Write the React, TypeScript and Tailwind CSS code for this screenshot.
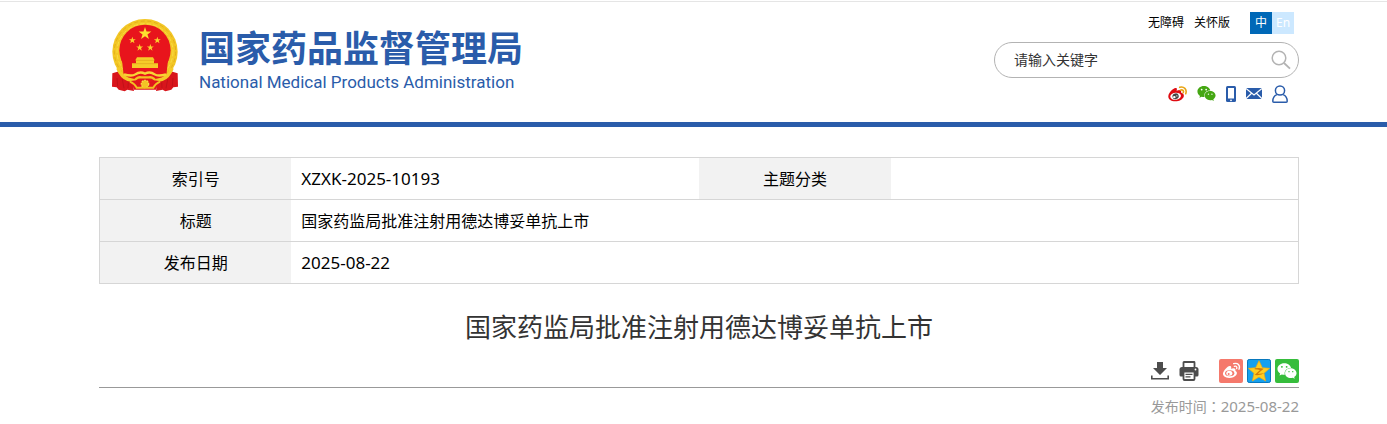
import { useState } from "react";
import { FaWeixin } from "react-icons/fa";

const rows = [
  { label: "标题", value: "国家药监局批准注射用德达博妥单抗上市", size: "text-base" },
  { label: "发布日期", value: "2025-08-22", size: "text-[17px]" },
];

const STAR = "M0 -10 L2.3 -3.1 9.5 -3.1 3.7 1.2 5.9 8.1 0 3.9 -5.9 8.1 -3.7 1.2 -9.5 -3.1 -2.3 -3.1Z";

function Emblem() {
  return (
    <svg viewBox="33 24 204 222" className="h-[74px] w-[68px] shrink-0" aria-hidden="true">
      <circle cx="135" cy="125" r="98" fill="#f3c725" />
      <circle cx="135" cy="125" r="92" fill="none" stroke="#e4b01c" strokeWidth="3" strokeDasharray="12 8" />
      <circle cx="135" cy="125" r="84" fill="none" stroke="#f9dc45" strokeWidth="3" strokeDasharray="14 6" />
      <path d="M66 150H204L196 226H74Z" fill="#e5171c" />
      <circle cx="135" cy="121" r="77" fill="#e8141c" />
      <path d={STAR} fill="#fde02f" transform="translate(135 71) scale(2)" />
      <path d={STAR} fill="#fbd02c" transform="translate(97 91) scale(1.1)" />
      <path d={STAR} fill="#fbd02c" transform="translate(172 91) scale(1.1)" />
      <path d={STAR} fill="#fbd02c" transform="translate(119 113) scale(1.1)" />
      <path d={STAR} fill="#fbd02c" transform="translate(151 113) scale(1.1)" />
      <path d="M111 142h48l5 9h-58zM108 151h54v9h-54zM96 160h78v14H96z" fill="#f6cb28" />
      <path d="M107 151h56M97 161h76" stroke="#e0a11c" strokeWidth="2" />
      <path d="M37 190 L63 182 Q69 206 96 205 L102 243 L82 239 L74 244 L56 239 L50 232 L36 230Z" fill="#d8151c" />
      <path d="M233 190 L207 182 Q201 206 174 205 L168 243 L188 239 L196 244 L214 239 L220 232 L234 230Z" fill="#d8151c" />
      <path d="M54 174 Q64 200 84 208 L106 213" fill="none" stroke="#f5c928" strokeWidth="11" />
      <path d="M216 174 Q206 200 186 208 L164 213" fill="none" stroke="#f5c928" strokeWidth="11" />
      <path d="M72 193 Q96 200 106 193 Q120 183 135 191 Q150 183 164 193 Q174 200 198 193" fill="none" stroke="#f8d435" strokeWidth="7" />
      <path d="M100 219 Q108 199 124 202 H146 Q162 199 170 219" fill="none" stroke="#f2c122" strokeWidth="7" />
      <path d="M92 213 L111 211 Q135 239 159 211 L178 213 L168 239 H102Z" fill="#e0171d" />
      <circle cx="135" cy="222" r="11" fill="#f3c325" stroke="#f9dd4b" strokeWidth="4" strokeDasharray="5 3" />
      <path d="M90 215 Q104 221 110 233 H160 Q166 221 180 215" fill="none" stroke="#f2c122" strokeWidth="6" />
      <path d="M51 204l2 25M67 208l5 27M85 217l-1 17M219 204l-2 25M203 208l-5 27M185 217l1 17" stroke="#b50f16" strokeWidth="2" fill="none" />
    </svg>
  );
}

function WeiboIcon() {
  return (
    <svg viewBox="0 0 60 48" className="h-4 w-[19px]" aria-hidden="true">
      <path d="M24 5C30 4 28 11 27 14C35 10 44 10 41 19C60 25 47 47 24 47C8 47 0 39 1 30C3 19 15 6 24 5Z" fill="#df0b12" />
      <ellipse cx="24" cy="31" rx="17" ry="11" fill="#fff" transform="rotate(-7 24 31)" />
      <ellipse cx="24" cy="31" rx="10" ry="9" fill="#444" transform="rotate(-12 24 31)" />
      <ellipse cx="20" cy="34" rx="4" ry="3.5" fill="#fff" />
      <circle cx="28" cy="30" r="2" fill="#fff" />
      <path d="M37 3C50 -1 61 9 56 23M39 12C46 9 51 14 48 20" fill="none" stroke="#e8a414" strokeWidth="5" strokeLinecap="round" />
    </svg>
  );
}

function PhoneIcon() {
  return (
    <svg viewBox="0 0 10 16" className="h-4 w-[10px]" aria-hidden="true">
      <rect width="10" height="16" rx="1.5" fill="#2a5caa" />
      <path d="M2 2h6v10.5H2z" fill="#fff" />
      <circle cx="5" cy="14.3" r=".9" fill="#fff" />
    </svg>
  );
}

function MailIcon() {
  return (
    <svg viewBox="0 0 16 11" className="h-[11px] w-4" aria-hidden="true">
      <path d="M0 0h16v11H0z" fill="#2a5caa" />
      <path d="M0 .5 8 7 16 .5M0 10.7 5.6 5.2M16 10.7 10.4 5.2" fill="none" stroke="#fff" strokeWidth="1.2" />
    </svg>
  );
}

function UserIcon() {
  return (
    <svg viewBox="0 0 16 18" className="h-[18px] w-4" fill="none" stroke="#2a5caa" strokeWidth="1.5" aria-hidden="true">
      <circle cx="8" cy="5.5" r="4.6" />
      <path d="M5 9.6C2.2 10.6.8 12.7.8 16.2Q.8 17.2 1.8 17.2H14.2Q15.2 17.2 15.2 16.2C15.2 12.7 13.8 10.6 11 9.6" />
    </svg>
  );
}

function SearchIcon() {
  return (
    <svg viewBox="0 0 20 20" className="size-5" fill="none" stroke="#b3b3b3" aria-hidden="true">
      <circle cx="8" cy="8" r="6.8" strokeWidth="1.5" />
      <path d="M13 13l6 5.6" strokeWidth="1.8" />
    </svg>
  );
}

function DownloadIcon() {
  return (
    <svg viewBox="0 0 18 18" className="size-[18px]" fill="#4d4d4d" aria-hidden="true">
      <path d="M6 0h6v6h4L9 13 2 6h4z" />
      <path d="M.8 13.5v3.3h16.4v-3.3" fill="none" stroke="#4d4d4d" strokeWidth="1.6" />
    </svg>
  );
}

function PrintIcon() {
  return (
    <svg viewBox="0 0 20 20" className="size-5" aria-hidden="true">
      <path d="M4.5 6V1.5Q4.5 1 5 1h10q.5 0 .5.5V6" fill="#fff" stroke="#4d4d4d" strokeWidth="1.8" />
      <path d="M3 6h14q2.5 0 2.5 2.5v5.5q0 1.5-1.5 1.5H2Q.5 15.5.5 14V8.5Q.5 6 3 6z" fill="#4d4d4d" />
      <path d="M4.5 10.5h11v7.5q0 1-1 1h-9q-1 0-1-1z" fill="#fff" stroke="#4d4d4d" strokeWidth="1.8" />
      <path d="M6.5 13.3h7M6.5 15.9h5" stroke="#4d4d4d" strokeWidth="1.3" />
      <circle cx="16.5" cy="8.5" r=".9" fill="#fff" />
    </svg>
  );
}

function WeiboShare() {
  return (
    <svg viewBox="0 0 72 72" className="size-6" aria-hidden="true">
      <rect width="72" height="72" rx="6" fill="#f5796c" />
      <path d="M32 21C38 20 37 26 36 29C43 26 52 27 49 35C61 41 49 57 31 57C18 57 11 50 12 43C14 34 25 22 32 21Z" fill="#fff" />
      <ellipse cx="32" cy="43" rx="14" ry="9" fill="#f5796c" />
      <ellipse cx="31" cy="43" rx="9" ry="7.5" fill="#fff" />
      <circle cx="29" cy="45" r="3" fill="#f5796c" />
      <path d="M44 14C56 10 65 19 60 31M46 22C52 20 55 24 53 29" fill="none" stroke="#fff" strokeWidth="4" strokeLinecap="round" />
    </svg>
  );
}

function QzoneShare() {
  return (
    <svg viewBox="0 0 72 72" className="size-6" aria-hidden="true">
      <rect x="1.5" y="1.5" width="69" height="69" rx="5" fill="#16a0ee" stroke="#0878bd" strokeWidth="3" />
      <path d="M36 5 46 26 68 28 51 43 56 66 36 54 16 66 21 43 4 28 26 26Z" fill="#ffce21" stroke="#f5a70d" strokeWidth="2" strokeLinejoin="round" />
      <path d="M23 28Q36 25 50 29L32 44Q42 45 52 43Q42 50 23 48L39 33Q31 31 23 31Z" fill="#d47909" />
    </svg>
  );
}

export default function App() {
  const [keyword, setKeyword] = useState("");

  return (
    <div className="border-t border-white bg-white font-['Noto_Sans','Noto_Sans_CJK_SC',sans-serif] text-black">
      <header className="border-t border-b-5 border-t-[#e5e5e5] border-b-[#2a5caa] pl-[11px]">
        <div className="mx-auto flex h-[120px] max-w-[1200px] justify-between">
          <a href="#" className="flex items-start gap-5 pt-4 pl-3 text-[#2a5caa]">
            <Emblem />
            <span className="block pt-1">
              <span className="block font-['Noto_Sans_CJK_SC',sans-serif] text-4xl leading-12 font-bold">
                国家药品监督管理局
              </span>
              <span className="block font-[Roboto,sans-serif] text-[17px] leading-6">
                National Medical Products Administration
              </span>
            </span>
          </a>

          <div className="w-[305px] pt-[10px]">
            <div className="flex items-center justify-end gap-[10px] pr-[5px] text-xs">
              <a href="#">无障碍</a>
              <a href="#">关怀版</a>
              <div className="ml-[10px] flex text-center leading-[22px] text-white">
                <a href="#" className="size-[22px] bg-[#0068b7]">中</a>
                <a href="#" className="size-[22px] bg-[#cce8ff]">En</a>
              </div>
            </div>
            <form
              onSubmit={(e) => e.preventDefault()}
              className="mt-2 flex h-9 items-center rounded-full border border-[#b3b3b3] pr-[7px] pl-[19px]"
            >
              <input
                type="text"
                aria-label="请输入关键字"
                placeholder="请输入关键字"
                value={keyword}
                onChange={(e) => setKeyword(e.target.value)}
                className="min-w-0 flex-1 bg-transparent text-sm outline-none placeholder:text-[#333]"
              />
              <button type="submit" aria-label="搜索">
                <SearchIcon />
              </button>
            </form>
            <div className="mt-1.5 flex items-center justify-end gap-[10px] pr-[11px]">
              <a href="#" aria-label="微博"><WeiboIcon /></a>
              <a href="#" aria-label="微信"><FaWeixin className="size-[19px] text-[#45a713]" /></a>
              <a href="#" aria-label="手机"><PhoneIcon /></a>
              <a href="#" aria-label="邮箱"><MailIcon /></a>
              <a href="#" aria-label="用户"><UserIcon /></a>
            </div>
          </div>
        </div>
      </header>

      <main className="pl-[11px]">
        <div className="mx-auto max-w-[1200px] pt-[30px]">
          <table className="w-full table-fixed border-collapse border border-[#d6d6d6] leading-6">
            <colgroup>
              <col className="w-[16%]" />
              <col className="w-[34%]" />
              <col className="w-[16%]" />
              <col className="w-[34%]" />
            </colgroup>
            <tbody>
              <tr className="h-[42px] border-b border-[#d6d6d6]">
                <th className="bg-[#f2f2f2] font-normal">索引号</th>
                <td className="px-[10px] text-[17px]">XZXK-2025-10193</td>
                <th className="bg-[#f2f2f2] font-normal">主题分类</th>
                <td />
              </tr>
              {rows.map((row) => (
                <tr key={row.label} className="h-[42px] border-b border-[#d6d6d6]">
                  <th className="bg-[#f2f2f2] font-normal">{row.label}</th>
                  <td colSpan={3} className={`px-[10px] leading-6 ${row.size}`}>{row.value}</td>
                </tr>
              ))}
            </tbody>
          </table>

          <h1 className="mt-6 text-center text-[26px] leading-[38px] text-[#333]">
            国家药监局批准注射用德达博妥单抗上市
          </h1>

          <div className="mt-[13px] flex items-center justify-end border-b border-[#999] pb-1">
            <button type="button" aria-label="下载" className="mr-[10px]"><DownloadIcon /></button>
            <button type="button" aria-label="打印" className="mr-5"><PrintIcon /></button>
            <div className="flex gap-1">
              <a href="#" aria-label="分享到微博"><WeiboShare /></a>
              <a href="#" aria-label="分享到QQ空间"><QzoneShare /></a>
              <a href="#" aria-label="分享到微信" className="flex size-6 items-center justify-center rounded-xs bg-[#36bd3c]">
                <FaWeixin className="size-5 text-white" />
              </a>
            </div>
          </div>
          <p className="pt-1.5 pb-1 text-right font-['Noto_Sans','Noto_Sans_CJK_TC',sans-serif] text-sm leading-6 text-[#999]">
            <span lang="zh-Hant">发布时间：</span>
            <time dateTime="2025-08-22" className="text-[15px]">2025-08-22</time>
          </p>
        </div>
      </main>
    </div>
  );
}
